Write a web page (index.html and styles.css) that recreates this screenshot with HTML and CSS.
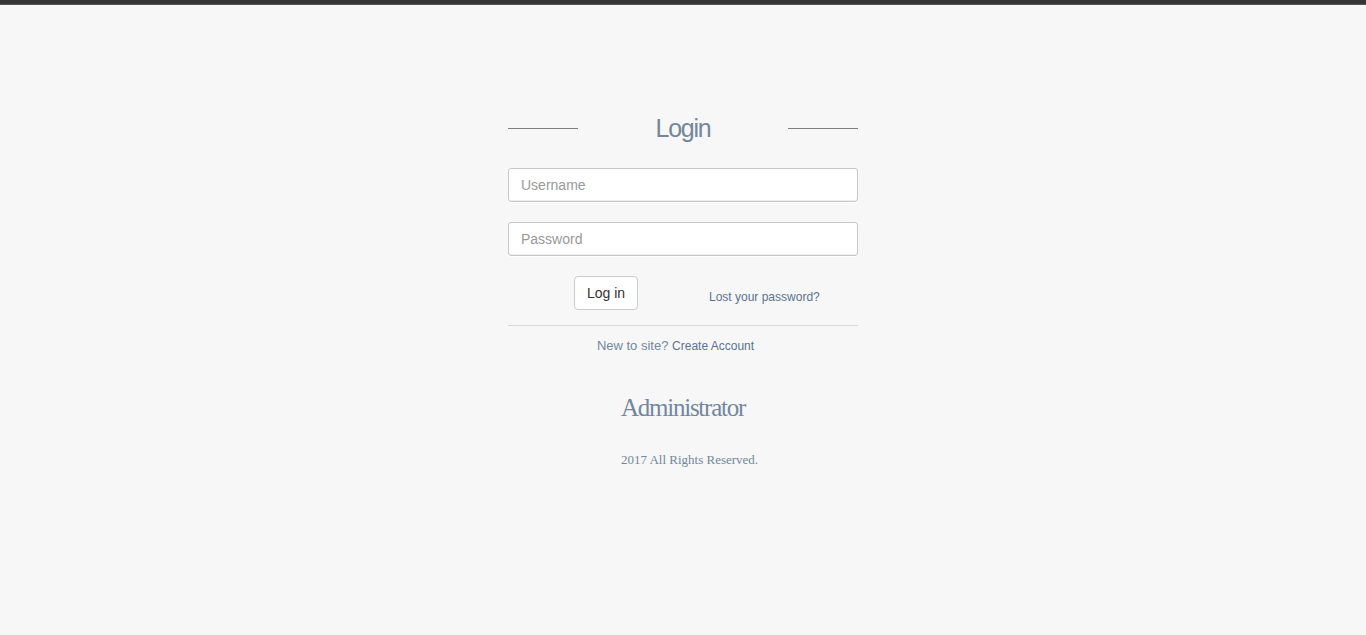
FILE: index.html
```html
<!DOCTYPE html>
<html>
<head>
<meta charset="utf-8">
<title>Login</title>
<link rel="stylesheet" href="styles.css">
</head>
<body>
<div class="topbar"></div>
<main class="wrapper">
  <section class="login">
    <form class="login-form">
      <h1 class="title">Login</h1>
      <input class="field" type="text" placeholder="Username">
      <input class="field" type="password" placeholder="Password">
      <div class="actions">
        <button class="btn" type="button">Log in</button>
        <a class="reset" href="#">Lost your password?</a>
      </div>
      <div class="separator">
        <p class="change">New to site? <a class="link" href="#">Create Account</a></p>
        <h1 class="brand">Administrator</h1>
        <p class="copy">2017 All Rights Reserved.</p>
      </div>
    </form>
  </section>
</main>
</body>
</html>
```

FILE: styles.css
```css
* { box-sizing: border-box; }
html, body { margin: 0; padding: 0; }
body {
  background: #F7F7F7;
  font-family: "Liberation Sans", Arial, sans-serif;
  font-size: 13px;
  color: #73879C;
  height: 635px;
  overflow: hidden;
}
.topbar {
  height: 5px;
  background: #363636;
  border-bottom: 1px solid #555;
}
.wrapper {
  display: flex;
  justify-content: center;
}
.login {
  width: 350px;
  margin-top: 113px;
}
.login-form {
  display: flex;
  flex-direction: column;
}
.title {
  font: 400 25px "Liberation Sans", Arial, sans-serif;
  letter-spacing: -0.05em;
  line-height: 20px;
  margin: 0 0 30px;
  display: flex;
  align-items: center;
  justify-content: space-between;
  color: #73879C;
}
.title::before, .title::after {
  content: "";
  width: 70px;
  height: 1px;
  background: #7e7e7e;
}
.field {
  height: 34px;
  width: 100%;
  margin: 0 0 20px;
  padding: 6px 12px;
  border: 1px solid #c8c8c8;
  border-radius: 3px;
  background: #fff;
  box-shadow: 0 1px 0 #fff, 0 -1px 0 rgba(0,0,0,0.07) inset;
  font: 14px "Liberation Sans", Arial, sans-serif;
  color: #555;
}
.field::placeholder { color: #999; }
.actions {
  display: flex;
  align-items: center;
  padding-left: 66px;
  height: 34px;
}
.btn {
  height: 34px;
  width: 64px;
  padding: 0;
  background: #fff;
  border: 1px solid #ccc;
  border-radius: 4px;
  font: 14px "Liberation Sans", Arial, sans-serif;
  color: #333;
}
.reset {
  margin-left: 71px;
  margin-top: 7px;
  font-size: 12px;
  color: #5A738E;
  text-decoration: none;
}
.separator {
  margin-top: 15px;
  border-top: 1px solid #D8D8D8;
  padding-top: 10px;
  display: flex;
  flex-direction: column;
  align-items: center;
}
.change {
  margin: 0;
  line-height: 20px;
  padding-right: 15px;
  font-size: 13px;
}
.link {
  color: #5A738E;
  text-decoration: none;
  font-size: 12px;
}
.brand {
  margin: 37px 0 0;
  font: 400 25px "Liberation Serif", "Times New Roman", serif;
  letter-spacing: -0.05em;
  line-height: 30px;
  color: #73879C;
}
.copy {
  margin: 28px 0 0;
  padding-left: 13px;
  font: 13px "Liberation Serif", "Times New Roman", serif;
  line-height: 18px;
  color: #73879C;
}
```
